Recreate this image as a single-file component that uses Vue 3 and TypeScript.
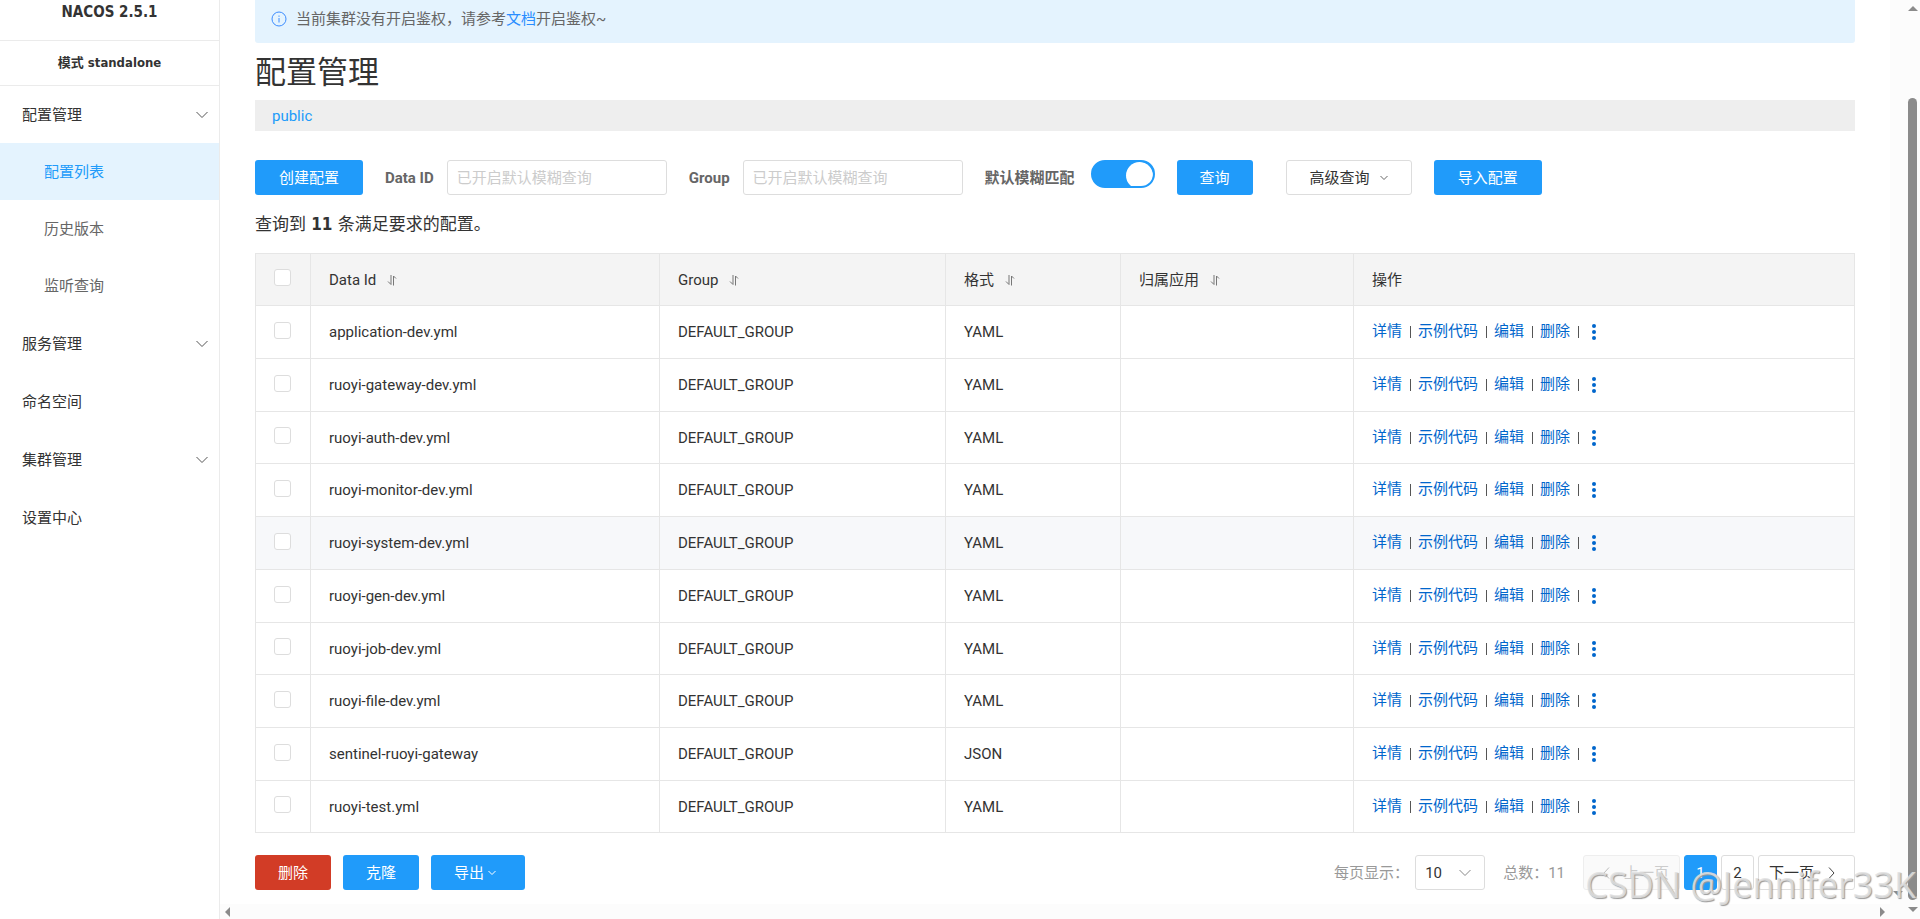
<script setup lang="ts">
import { ref } from 'vue'

interface MenuItem {
  label: string
  expandable: boolean
  children: string[]
}

interface ConfigRow {
  dataId: string
  group: string
  format: string
  app: string
}

const menu: MenuItem[] = [
  { label: '配置管理', expandable: true, children: ['配置列表', '历史版本', '监听查询'] },
  { label: '服务管理', expandable: true, children: [] },
  { label: '命名空间', expandable: false, children: [] },
  { label: '集群管理', expandable: true, children: [] },
  { label: '设置中心', expandable: false, children: [] },
]

const activeMenu = ref('配置列表')

const columns = [
  { key: 'dataId', title: 'Data Id' },
  { key: 'group', title: 'Group' },
  { key: 'format', title: '格式' },
  { key: 'app', title: '归属应用' },
]

const makeRow = (dataId: string, format = 'YAML'): ConfigRow => ({
  dataId,
  group: 'DEFAULT_GROUP',
  format,
  app: '',
})

const rows: ConfigRow[] = [
  makeRow('application-dev.yml'),
  makeRow('ruoyi-gateway-dev.yml'),
  makeRow('ruoyi-auth-dev.yml'),
  makeRow('ruoyi-monitor-dev.yml'),
  makeRow('ruoyi-system-dev.yml'),
  makeRow('ruoyi-gen-dev.yml'),
  makeRow('ruoyi-job-dev.yml'),
  makeRow('ruoyi-file-dev.yml'),
  makeRow('sentinel-ruoyi-gateway', 'JSON'),
  makeRow('ruoyi-test.yml'),
]

const actions = ['详情', '示例代码', '编辑', '删除']
const highlighted = 'ruoyi-system-dev.yml'

const total = ref(11)
const dataId = ref('')
const group = ref('')
const fuzzy = ref(true)
const pageSize = ref(10)
const page = ref(1)
const selected = ref<string[]>([])

function toggleAll(event: Event) {
  const checked = (event.target as HTMLInputElement).checked
  selected.value = checked ? rows.map((row) => row.dataId) : []
}
</script>

<template>
  <div class="app">
    <aside class="sidebar">
      <div class="brand">NACOS 2.5.1</div>
      <div class="mode">模式 standalone</div>
      <nav>
        <ul class="menu">
          <li v-for="item in menu" :key="item.label">
            <a class="menu-item" href="#">
              <span>{{ item.label }}</span>
              <svg v-if="item.expandable" width="12" height="8" viewBox="0 0 12 8" aria-hidden="true">
                <path d="M0.5 1 L6 6.5 L11.5 1" fill="none" stroke="#555" />
              </svg>
            </a>
            <ul v-if="item.children.length" class="submenu">
              <li v-for="child in item.children" :key="child">
                <a
                  class="menu-item sub"
                  :class="{ active: child === activeMenu }"
                  href="#"
                  @click.prevent="activeMenu = child"
                >{{ child }}</a>
              </li>
            </ul>
          </li>
        </ul>
      </nav>
    </aside>

    <div class="pane">
      <div class="pane-row">
        <main class="main">
          <div class="notice">
            <svg width="16" height="16" viewBox="0 0 16 16" aria-hidden="true">
              <circle cx="8" cy="8" r="7" fill="none" stroke="#3c8cff" />
              <path d="M8 4.5 V5.8 M8 7 V11.5" stroke="#3c8cff" />
            </svg>
            <span>当前集群没有开启鉴权，请参考<a href="#">文档</a>开启鉴权~</span>
          </div>

          <h1>配置管理</h1>
          <div class="namespace"><a href="#">public</a></div>

          <form class="toolbar" @submit.prevent>
            <button type="button" class="btn primary">创建配置</button>
            <div class="field">
              <label for="data-id">Data ID</label>
              <input id="data-id" v-model="dataId" type="text" placeholder="已开启默认模糊查询" />
            </div>
            <div class="field">
              <label for="group">Group</label>
              <input id="group" v-model="group" type="text" placeholder="已开启默认模糊查询" />
            </div>
            <div class="field switch-field">
              <label for="fuzzy">默认模糊匹配</label>
              <input id="fuzzy" v-model="fuzzy" class="switch" type="checkbox" role="switch" />
            </div>
            <button type="submit" class="btn primary compact">查询</button>
            <button type="button" class="btn plain">
              高级查询
              <svg width="8" height="6" viewBox="0 0 8 6" aria-hidden="true">
                <path d="M0.5 1 L4 4.5 L7.5 1" fill="none" stroke="#666" />
              </svg>
            </button>
            <button type="button" class="btn primary">导入配置</button>
          </form>

          <p class="summary">查询到 <strong>{{ total }}</strong> 条满足要求的配置。</p>

          <table>
            <colgroup>
              <col class="col-check" />
              <col class="col-id" />
              <col class="col-group" />
              <col class="col-format" />
              <col class="col-app" />
              <col />
            </colgroup>
            <thead>
              <tr>
                <th class="check">
                  <input type="checkbox" aria-label="全选" :checked="selected.length === rows.length" @change="toggleAll" />
                </th>
                <th v-for="column in columns" :key="column.key" scope="col">
                  <span class="head">
                    {{ column.title }}
                    <svg width="10" height="12" viewBox="0 0 10 12" aria-hidden="true">
                      <path d="M4 1 V10.5 L1 7.5 M6.5 11.5 V2 L9 4.5" fill="none" stroke="#777" />
                    </svg>
                  </span>
                </th>
                <th scope="col">操作</th>
              </tr>
            </thead>
            <tbody>
              <tr v-for="row in rows" :key="row.dataId" :class="{ hover: row.dataId === highlighted }">
                <td class="check">
                  <input v-model="selected" type="checkbox" :value="row.dataId" :aria-label="row.dataId" />
                </td>
                <td>{{ row.dataId }}</td>
                <td>{{ row.group }}</td>
                <td>{{ row.format }}</td>
                <td>{{ row.app }}</td>
                <td>
                  <div class="actions">
                    <template v-for="action in actions" :key="action">
                      <a href="#">{{ action }}</a>
                      <i class="bar"></i>
                    </template>
                    <button type="button" class="more" aria-label="更多">
                      <svg width="4" height="16" viewBox="0 0 4 16" aria-hidden="true">
                        <circle cx="2" cy="2" r="2" />
                        <circle cx="2" cy="8" r="2" />
                        <circle cx="2" cy="14" r="2" />
                      </svg>
                    </button>
                  </div>
                </td>
              </tr>
            </tbody>
          </table>

          <footer class="footer">
            <div class="bulk">
              <button type="button" class="btn danger compact">删除</button>
              <button type="button" class="btn primary compact">克隆</button>
              <button type="button" class="btn primary export">
                导出
                <svg width="8" height="6" viewBox="0 0 8 6" aria-hidden="true">
                  <path d="M0.5 1 L4 4.5 L7.5 1" fill="none" stroke="#fff" />
                </svg>
              </button>
            </div>
            <div class="pager">
              <label for="page-size">每页显示：</label>
              <div class="size">
                <select id="page-size" v-model="pageSize">
                  <option :value="10">10</option>
                  <option :value="20">20</option>
                </select>
                <svg width="12" height="8" viewBox="0 0 12 8" aria-hidden="true">
                  <path d="M0.5 1 L6 6.5 L11.5 1" fill="none" stroke="#888" />
                </svg>
              </div>
              <span class="total">总数：{{ total }}</span>
              <div class="pages">
                <button type="button" class="page step prev" disabled>
                  <svg width="7" height="12" viewBox="0 0 7 12" aria-hidden="true">
                    <path d="M6 0.5 L1 6 L6 11.5" fill="none" stroke="#bbb" />
                  </svg>
                  上一页
                </button>
                <button
                  v-for="n in 2"
                  :key="n"
                  type="button"
                  class="page"
                  :class="{ current: n === page }"
                  @click="page = n"
                >{{ n }}</button>
                <button type="button" class="page step next">
                  下一页
                  <svg width="7" height="12" viewBox="0 0 7 12" aria-hidden="true">
                    <path d="M1 0.5 L6 6 L1 11.5" fill="none" stroke="#444" />
                  </svg>
                </button>
              </div>
            </div>
          </footer>
        </main>
        <div class="track inner" aria-hidden="true"><i class="arrow down"></i></div>
      </div>
      <div class="track-x" aria-hidden="true">
        <i class="arrow left"></i>
        <i class="arrow right"></i>
      </div>
    </div>

    <div class="track outer" aria-hidden="true">
      <i class="arrow up"></i>
      <i class="thumb"></i>
      <i class="arrow down"></i>
    </div>

    <div class="watermark">CSDN @Jennifer33K</div>
  </div>
</template>

<style>
body {
  margin: 0;
  background: #fff;
}
</style>

<style scoped>
.app {
  position: relative;
  display: flex;
  min-height: 100vh;
  overflow: hidden;
  color: #333;
  font: 15px/24px Roboto, "Noto Sans CJK SC", sans-serif;
}

.app * {
  box-sizing: border-box;
}

a {
  color: #209bfa;
  text-decoration: none;
}

svg {
  flex: none;
}

input,
select,
button {
  font: inherit;
}

ul {
  margin: 0;
  padding: 0;
  list-style: none;
}

/* Sidebar */
.sidebar {
  flex: none;
  width: 220px;
  border-right: 1px solid #ebebeb;
}

.brand,
.mode {
  border-bottom: 1px solid #ebebeb;
  font-family: "DejaVu Sans Condensed", "DejaVu Sans", "Noto Sans CJK SC", sans-serif;
  font-weight: 700;
  text-align: center;
}

.brand {
  padding-bottom: 16px;
}

.mode {
  padding: 10px 0;
  font-size: 13px;
}

.menu {
  display: flex;
  flex-direction: column;
  gap: 1px;
}

.menu-item {
  display: flex;
  align-items: center;
  justify-content: space-between;
  height: 57px;
  padding: 0 11px 0 22px;
  color: #333;
}

.menu-item.sub {
  padding-left: 44px;
  color: #666;
}

.menu-item.active {
  background: #e4f3fe;
  color: #209bfa;
}

/* Content */
.pane {
  display: flex;
  flex: 1;
  flex-direction: column;
  min-width: 0;
}

.pane-row {
  display: flex;
  flex: 1;
}

.main {
  flex: 1;
  min-width: 0;
  padding: 0 35px 14px;
}

.notice {
  display: flex;
  align-items: center;
  gap: 9px;
  padding: 7px 16px 12px;
  border-radius: 0 0 3px 3px;
  background: #e4f3fe;
  color: #666;
}

.notice a {
  color: #298dff;
}

h1 {
  margin: 8px 0 5px;
  font-size: 31px;
  font-weight: 400;
  line-height: 44px;
}

.namespace {
  padding: 4px 17px 3px;
  background: #eee;
}

.btn {
  display: inline-flex;
  align-items: center;
  justify-content: center;
  height: 35px;
  padding: 0 24px;
  border: 0;
  border-radius: 3px;
  color: #fff;
}

.compact {
  padding: 0 23px;
}

.primary {
  background: #209bfa;
}

.danger {
  background: #d23c26;
}

.plain {
  gap: 10px;
  margin-left: 11px;
  padding: 0 23px;
  border: 1px solid #ddd;
  background: #fff;
  color: #333;
}

.toolbar {
  display: flex;
  flex-wrap: wrap;
  align-items: flex-start;
  gap: 22px;
  margin-top: 29px;
}

.field {
  display: flex;
  gap: 13px;
}

.switch-field {
  gap: 16px;
}

.field label {
  color: #666;
  font-weight: 700;
  line-height: 36px;
}

.field input[type="text"] {
  width: 220px;
  height: 35px;
  padding: 0 9px;
  border: 1px solid #ddd;
  border-radius: 3px;
  outline: 0;
}

.field input::placeholder {
  color: #ccc;
}

.switch {
  width: 64px;
  height: 28px;
  margin: 0;
  border: 2px solid #209bfa;
  border-radius: 14px;
  overflow: hidden;
  appearance: none;
  background: #209bfa;
}

.switch::before {
  display: block;
  width: 27px;
  height: 27px;
  margin-left: auto;
  border-radius: 50%;
  background: #fff;
  content: "";
}

.switch:not(:checked)::before {
  margin-left: 0;
}

.summary {
  margin: 16px 0 17px;
  font-size: 17px;
}

.summary strong {
  margin: 0 1px;
  font-family: "DejaVu Sans Condensed", "DejaVu Sans", sans-serif;
}

/* Table */
table {
  width: 100%;
  border: 1px solid #e6e6e6;
  border-width: 1px 0 0 1px;
  border-spacing: 0;
  table-layout: fixed;
}

.col-check {
  width: 55px;
}

.col-id {
  width: 349px;
}

.col-group {
  width: 286px;
}

.col-format {
  width: 175px;
}

.col-app {
  width: 233px;
}

th,
td {
  height: 53px;
  padding: 0 18px;
  border: 1px solid #e6e6e6;
  border-width: 0 1px 1px 0;
  font-weight: 400;
  text-align: left;
}

th {
  height: 52px;
  background: #f4f4f4;
}

tbody tr:nth-child(4n + 3) td,
tbody tr:last-child td {
  height: 52px;
}

.hover td {
  background: #f7f8fa;
}

.check {
  padding-bottom: 4px;
}

.check input {
  display: block;
  width: 17px;
  height: 17px;
  margin: 0;
  border: 1px solid #ddd;
  border-radius: 3px;
  appearance: none;
  background: #fff;
}

.check input:checked {
  background: #209bfa;
}

.head {
  display: flex;
  align-items: center;
  gap: 11px;
}

.actions {
  display: flex;
  align-items: center;
}

.actions a {
  padding-bottom: 2px;
  color: #06c;
}

.bar {
  width: 1px;
  height: 12px;
  margin: 0 7px 0 8px;
  background: #555;
}

.more {
  display: flex;
  margin-left: 6px;
  padding: 0;
  border: 0;
  background: none;
  fill: #06c;
}

/* Footer */
.footer {
  display: flex;
  flex-wrap: wrap;
  align-items: center;
  justify-content: space-between;
  margin-top: 22px;
}

.bulk {
  display: flex;
  gap: 12px;
}

.export {
  gap: 4px;
  padding: 0 29px 0 23px;
}

.pager {
  display: flex;
  align-items: center;
  color: #999;
}

.pager label {
  margin-right: 6px;
}

.size {
  position: relative;
  margin-right: 18px;
}

.size select {
  width: 70px;
  height: 35px;
  padding: 0 9px;
  border: 1px solid #ddd;
  border-radius: 3px;
  appearance: none;
  background: #fff;
  color: #333;
}

.size svg {
  position: absolute;
  top: 14px;
  right: 14px;
}

.total {
  margin-right: 18px;
}

.pages {
  display: flex;
  gap: 4px;
}

.page {
  display: flex;
  align-items: center;
  justify-content: center;
  min-width: 33px;
  height: 35px;
  padding: 0 10px;
  border: 1px solid #ddd;
  border-radius: 3px;
  background: #fff;
  color: #333;
}

.page.current {
  border-color: #209bfa;
  background: #209bfa;
  color: #fff;
}

.step {
  gap: 14px;
  width: 97px;
}

.prev {
  justify-content: flex-end;
}

.next {
  justify-content: flex-start;
}

.step:disabled {
  border-color: #eee;
  background: #fafafa;
  color: #ccc;
}

/* Scroll tracks */
.track {
  display: flex;
  flex: none;
  flex-direction: column;
  align-items: center;
  width: 15px;
  background: #fcfcfc;
}

.inner {
  justify-content: flex-end;
  padding-bottom: 8px;
}

.outer {
  gap: 7px;
  padding: 6px 0 7px;
}

.track-x {
  display: flex;
  align-items: center;
  justify-content: space-between;
  height: 15px;
  padding: 0 20px 0 5px;
  background: #fcfcfc;
}

.thumb {
  flex: 1;
  width: 9px;
  margin-top: 80px;
  border-radius: 5px;
  background: #8b8b8b;
}

.arrow {
  border: 5px solid transparent;
}

.up {
  border-top: 0;
  border-bottom-color: #8b8b8b;
}

.down {
  border-bottom: 0;
  border-top-color: #8b8b8b;
}

.left {
  border-left: 0;
  border-right-color: #8b8b8b;
}

.right {
  border-right: 0;
  border-left-color: #8b8b8b;
}

.watermark {
  position: absolute;
  right: 4px;
  bottom: 10px;
  color: rgba(225, 225, 225, 0.85);
  font: 36px/48px "Open Sans", sans-serif;
  text-shadow: 1px 1px 1px #999;
  pointer-events: none;
}
</style>
